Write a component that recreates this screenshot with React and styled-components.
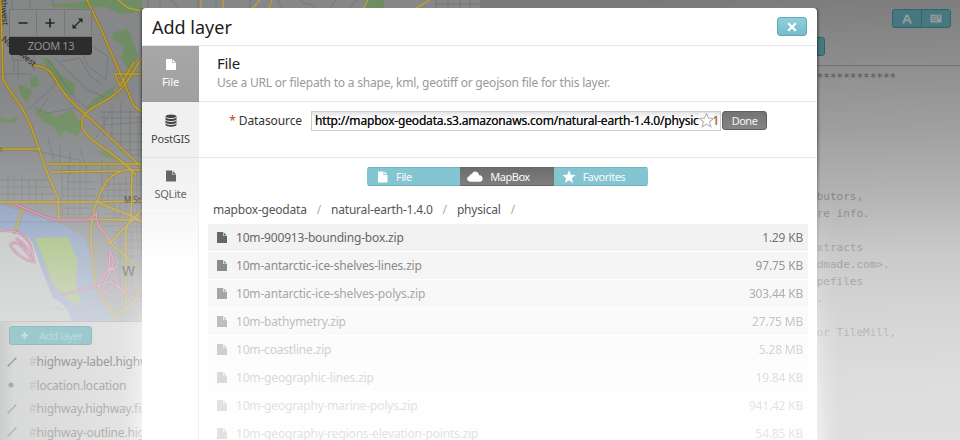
import React from "react";
import styled, { createGlobalStyle, css } from "styled-components";

const Global = createGlobalStyle`
  * { box-sizing: border-box; }
  html, body { margin: 0; padding: 0; }
  body { font-family: "Noto Sans", "Open Sans", sans-serif; font-size: 12px; color: #444; overflow: hidden; }
`;

const Screen = styled.div`
  position: relative;
  width: 960px;
  height: 440px;
  overflow: hidden;
`;

const Workspace = styled.div`
  display: flex;
  height: 440px;
  background:
    radial-gradient(ellipse 900px 520px at 1000px 480px, rgba(225,225,225,.5) 0%, rgba(225,225,225,.3) 50%, rgba(225,225,225,0) 100%),
    linear-gradient(#797979 0, #828282 60px, #909090 130px, #a5a5a5 200px, #bfbfbf 255px, #cfcfcf 320px, #dadada 380px, #dedede 440px);
`;

const LeftPane = styled.div`
  display: flex;
  flex-direction: column;
  width: 480px;
`;

const MapFrame = styled.div`
  position: relative;
  flex: none;
  height: 321px;
  overflow: hidden;
  svg { display: block; }
`;

const MapFade = styled.div`
  position: absolute;
  inset: 0;
  background: linear-gradient(rgba(228,229,230,0) 90px, rgba(228,229,230,.1) 150px, rgba(228,229,230,.26) 200px, rgba(228,229,230,.5) 250px, rgba(228,229,230,.68) 290px, rgba(228,229,230,.78) 321px);
`;

const ZoomControl = styled.div`
  position: absolute;
  left: 9px;
  top: 9px;
  width: 83px;
  border-radius: 3px;
  overflow: hidden;
  background: #2c2c2c;
`;

const ZoomButtons = styled.div`
  display: flex;
  height: 28px;
`;

const ZoomButton = styled.div`
  display: flex;
  flex: 1;
  align-items: center;
  justify-content: center;
  background: #888989;
  border: 1px solid #777;
  border-left-width: ${(p) => (p.$first ? "1px" : "0")};
`;

const ZoomLabel = styled.div`
  height: 18px;
  line-height: 17px;
  padding-left: 1px;
  text-align: center;
  font-size: 11px;
  letter-spacing: -0.35px;
  color: #939393;
`;

const LayerPanel = styled.div`
  flex: 1;
  min-height: 0;
  width: 142px;
  overflow: hidden;
  padding: 4px 0 0 9px;
  background: linear-gradient(90deg, #cccece 0, #d8d9d9 14px, #dedede 70px, #e6e6e6 142px);
  border-top: 1px solid #c8caca;
`;

const AddLayerButton = styled.div`
  display: flex;
  align-items: center;
  gap: 10px;
  width: 83px;
  height: 19px;
  padding-left: 10px;
  margin-bottom: 5px;
  border: 1px solid #93bcbf;
  border-radius: 3px;
  background: #9cc9cd;
  color: #b9dbde;
  font-size: 11px;
  letter-spacing: -0.6px;
  white-space: nowrap;
`;

const LayerRow = styled.div`
  display: flex;
  align-items: center;
  height: 23.5px;
  white-space: nowrap;
  color: ${(p) => p.$tone};
  font-size: 12px;
  letter-spacing: -0.2px;
  svg { width: 20px; height: 14px; margin-left: -5px; margin-right: 5px; flex: none; }
`;

const Hash = styled.span`
  color: #c6c6c6;
`;

const Editor = styled.div`
  display: flex;
  flex-direction: column;
  flex: 1;
`;

const EditorToolbar = styled.div`
  display: flex;
  flex-direction: column;
  height: 66px;
  flex: none;
  padding: 9px 9px 0 0;
  border-bottom: 1px solid #727272;
  box-shadow: 0 1px 0 #8a8a8a;
`;

const ToolGroup = styled.div`
  display: flex;
  align-self: flex-end;
  width: 59px;
  height: 19px;
  border: 1px solid #33626a;
  border-radius: 3px;
  background: #457880;
`;

const ToolButton = styled.div`
  display: flex;
  flex: 1;
  align-items: center;
  justify-content: center;
  & + & { border-left: 1px solid #33626a; }
`;

const StyleTab = styled.div`
  width: 40px;
  height: 19px;
  margin: 9px 0 0 305px;
  border: 1px solid #33626a;
  border-radius: 3px;
  background: #457880;
`;

const Code = styled.div`
  padding: 3px 0 0 336.7px;
  font-family: "DejaVu Sans Mono", "Liberation Mono", monospace;
  font-size: 11px;
  white-space: pre;
`;

const CodeLine = styled.div`
  height: 17px;
  line-height: 17px;
  margin-top: ${(p) => p.$skip * 17}px;
  color: ${(p) => p.$tone};
`;

const Glow = styled.div`
  position: absolute;
  left: 142px;
  top: 0;
  width: 675px;
  height: 460px;
  box-shadow: 0 0 22px 2px #fff;
`;

const GlowLayer = styled.div`
  position: absolute;
  inset: 0;
  overflow: hidden;
  mask-image: linear-gradient(transparent 180px, rgba(0,0,0,.35) 300px, rgba(0,0,0,.9) 440px);
`;

const Modal = styled.div`
  position: absolute;
  left: 142px;
  top: 8px;
  width: 675px;
  height: 440px;
  border-radius: 4px 4px 0 0;
  overflow: hidden;
  background: #fff;
`;

const ModalEdge = styled.div`
  position: absolute;
  left: 142px;
  top: 8px;
  width: 675px;
  height: 440px;
  border-radius: 4px 4px 0 0;
  box-shadow: 0 0 3px 1px rgba(0,0,0,.5);
  mask-image: linear-gradient(#000 120px, rgba(0,0,0,.25) 230px, transparent 310px);
  mask-clip: no-clip;
`;

const ModalHeader = styled.div`
  display: flex;
  align-items: center;
  justify-content: space-between;
  height: 38px;
  padding: 0 10px;
  border-bottom: 1px solid #e6e6e6;
`;

const Title = styled.div`
  font-size: 18px;
  color: #1c1c1c;
`;

const CloseButton = styled.div`
  display: flex;
  align-items: center;
  justify-content: center;
  width: 30px;
  height: 19px;
  border: 1px solid #62a8b6;
  border-radius: 3px;
  background: linear-gradient(#8fcfdb, #75bccb);
`;

const ModalBody = styled.div`
  display: flex;
  height: 402px;
`;

const SideTabs = styled.div`
  width: 57px;
  background: linear-gradient(#f0f0f0 110px, #f4f4f4 150px, #fff 220px);
  border-right: 1px solid #f0f0f0;
`;

const SideTab = styled.div`
  display: flex;
  flex-direction: column;
  align-items: center;
  height: 56px;
  padding-top: ${(p) => (p.$active ? 13 : 12)}px;
  font-size: 11px;
  line-height: 15px;
  letter-spacing: -0.2px;
  gap: 4px;
  margin-right: -1px;
  color: ${(p) => p.$tone};
  border-bottom: 1px solid #e2e2e2;
  ${(p) => p.$active && css`
    color: #fff;
    background: linear-gradient(#a7a7a7, #a0a0a0);
    border-color: #999;
  `}
  &:last-child { border-bottom-color: #f3f3f3; }
`;

const Content = styled.div`
  flex: 1;
  min-width: 0;
`;

const Intro = styled.div`
  height: 56px;
  padding: 8px 0 0 18px;
  border-bottom: 1px solid #e6e6e6;
`;

const IntroTitle = styled.div`
  font-size: 15px;
  line-height: 19px;
  letter-spacing: -0.3px;
  color: #222;
`;

const IntroText = styled.div`
  font-size: 12px;
  line-height: 20px;
  letter-spacing: -0.21px;
  color: #999;
`;

const Field = styled.div`
  display: flex;
  align-items: flex-start;
  height: 56px;
  padding-top: 9px;
  border-bottom: 1px solid #e6e6e6;
`;

const FieldLabel = styled.div`
  width: 112px;
  padding-right: 9px;
  text-align: right;
  line-height: 19px;
  letter-spacing: -0.1px;
  color: #333;
`;

const Required = styled.span`
  color: #c5472b;
  margin-right: 3px;
`;

const UrlInput = styled.div`
  position: relative;
  width: 410px;
  height: 20px;
  padding-left: 3px;
  line-height: 18px;
  overflow: hidden;
  white-space: nowrap;
  border: 1px solid #ccc;
  background: linear-gradient(#e3e3e3, #f8f8f8 5px, #fff);
  letter-spacing: -0.18px;
  color: #111;
  text-shadow: 0 0 0.5px #333;
`;

const FavoriteStar = styled.div`
  position: absolute;
  right: 6px;
  top: 1px;
  display: flex;
  background: linear-gradient(#f2f2f2, #fcfcfc 5px, #fff);
`;

const Orange = styled.span`
  color: #c8793d;
`;

const DoneButton = styled.div`
  width: 45px;
  height: 19px;
  margin-left: 1px;
  border: 1px solid #5f5f5f;
  border-radius: 3px;
  background: linear-gradient(#747474, #858585);
  color: #f4f4f4;
  font-size: 11px;
  line-height: 17px;
  letter-spacing: -0.5px;
  text-align: center;
`;

const SourceTabs = styled.div`
  display: flex;
  width: 281px;
  height: 19px;
  margin: 9px 0 0 168px;
  border-radius: 3px;
  overflow: hidden;
`;

const SourceTab = styled.div`
  display: flex;
  flex: 1 1 0;
  align-items: center;
  padding-left: ${(p) => p.$inset}px;
  border: 1px solid ${(p) => (p.$active ? "#666" : "#6bb3c1")};
  border-width: 1px 0;
  background: ${(p) => (p.$active ? "linear-gradient(#6d6d6d, #7e7e7e)" : "#85c5d2")};
  color: #f6fbfc;
  font-size: 11px;
  line-height: 17px;
  letter-spacing: -0.5px;
  svg { margin-right: ${(p) => p.$gap}px; }
`;

const Breadcrumb = styled.div`
  display: flex;
  padding: 14px 0 0 14px;
  height: 38px;
  line-height: 20px;
  gap: 10px;
  letter-spacing: -0.2px;
  color: #555;
  white-space: nowrap;
`;

const Slash = styled.span`
  color: #aaa;
`;

const FileList = styled.div`
  display: flex;
  flex-direction: column;
  gap: 1px;
  margin: 0 9px;
`;

const FileRow = styled.div`
  display: flex;
  align-items: center;
  height: 27px;
  padding: 0 5px 0 9px;
  background: ${(p) => p.$fill};
  color: ${(p) => p.$tone};
  svg { margin-right: 9px; flex: none; }
`;

const FileName = styled.span`
  flex: 1;
  letter-spacing: -0.18px;
`;

const FileSize = styled.span`
  opacity: 0.9;
  letter-spacing: -0.2px;
`;

const DocIcon = ({ w = 10, h = 11 }) => (
  <svg width={w} height={h} viewBox="0 0 10 11">
    <path d="M0 0H6V4H10V11H0Z" fill="currentColor" />
    <path d="M6.6 0.3L9.8 3.4H6.6Z" fill="currentColor" />
  </svg>
);

const DatabaseIcon = () => (
  <svg width="12" height="13" viewBox="0 0 12 13">
    <path d="M0.5 2.5C0.5 -0.3 11.5 -0.3 11.5 2.5V10.5C11.5 13.4 0.5 13.4 0.5 10.5Z" fill="currentColor" />
    <path d="M0.5 3.2C2.5 5 9.5 5 11.5 3.2M0.5 6.2C2.5 8 9.5 8 11.5 6.2M0.5 9.2C2.5 11 9.5 11 11.5 9.2" stroke="#eee" strokeWidth="0.9" fill="none" />
  </svg>
);

const CloudIcon = () => (
  <svg width="16" height="11" viewBox="0 0 16 11">
    <path d="M3.6 10.7C-0.9 10.7 -0.8 5.6 2.6 5.2C2.6 3.4 4 2.7 5 3C6 -0.6 11.7 -0.3 12 4.3C16.6 4 16.8 10.7 12.8 10.7Z" fill="#fff" />
  </svg>
);

const StarShape = "M7 0.3L8.8 4.8L13.6 5.1L9.9 8.2L11.1 12.9L7 10.3L2.9 12.9L4.1 8.2L0.4 5.1L5.2 4.8Z";

const StarIcon = ({ fill = "#fff", stroke = "none", size = 14 }) => (
  <svg width={size} height={size} viewBox="0 0 14 14">
    <path d={StarShape} fill={fill} stroke={stroke} />
  </svg>
);

const LineIcon = () => (
  <svg viewBox="0 0 20 14">
    <path d="M5 10L11 4" stroke="currentColor" strokeWidth="1.1" />
    <circle cx="4.5" cy="10.5" r="1.1" fill="currentColor" />
    <circle cx="11.5" cy="3.5" r="1.1" fill="currentColor" />
  </svg>
);

const PointIcon = () => (
  <svg viewBox="0 0 20 14">
    <circle cx="7" cy="7" r="2.5" fill="currentColor" />
  </svg>
);

const mainRoads = [
  "M87 0L100 27L120 73L134 106L142 112",
  "M33 66C48 65 53 74 58 84C68 101 82 111 92 120L139 165",
  "M142 58C130 75 126 89 108 99C92 109 80 112 82 126C86 141 110 149 131 170L136 175",
  "M2 78C15 100 27 110 35 138L50 180L58 198L59 219",
  "M1 0L3 78",
  "M115 74H142",
  "M0 149H40M48 164H142M52 172L120 171",
  "M0 202H95L142 201",
  "M59 219L142 220",
  "M142 170H124C105 176 101 190 94 210C88 232 92 260 96 289",
  "M120 160L132 170L131 218L126 230V310",
  "M96 201C110 210 125 210 142 222",
  "M142 210L110 243L132 262L138 268",
  "M94 216L110 243",
  "M115 74L120 86L134 62",
  "M24 206L14 234",
  "M140 290C136 306 120 310 114 318M98 290C102 305 112 305 116 321",
];

const pinkRoads = [
  "M15 204C30 210 42 217 56 220H88L96 214",
  "M96 212L98 226L110 240",
  "M0 231C14 230 26 232 31 247L34 262C22 260 12 250 10 244",
  "M11 244C18 238 27 252 32 260M16 238C24 244 28 248 30 257",
  "M60 295L98 286L109 268L110 250",
  "M98 286L110 281L125 293L132 294M98 287L108 293L118 300",
  "M110 250L114 262L104 285M108 270C120 262 110 282 124 292",
  "M118 266L108 272",
];

const grayRoads = [
  "M0 18H30V0M12 0V60H28M0 40H12M18 52V78M0 74H32M34 70V48M14 57V74",
  "M82 36L60 20L52 0M55 58L72 75L88 90L104 97M47 58L62 80L76 100L90 110",
  "M88 44L108 56L106 80L88 66L80 48M60 62L80 58L90 76L102 85",
  "M28 110C40 96 56 90 55 80M36 116L48 98M42 114L76 108",
  "M30 150L80 160M60 145V165M70 151V175M80 150L88 172M48 138L55 165",
  "M100 112H142M100 118H142M104 125L142 122M110 134H142M115 142H142M104 112V136M112 108V142M121 102V148M130 108V160M138 116V170",
  "M96 138L110 112M120 150H142M126 155H142",
  "M8 175V205M14 175V205M22 175V205M29 180V205M36 180V205M42 190V205M0 180H50M0 187H52M0 194H54",
  "M62 166V220M68 162V220M74 164V220M80 160V218M86 164V205M66 182H94M62 189H96M62 196H96M64 208H92M60 214H92M102 160V200M108 162V205M114 176V218M120 180V218M126 176V222M137 170V240",
  "M104 184H142M104 190H142M100 196H142M104 214H142M100 226H142M112 232H142M120 240H142M120 248H142M116 256H142M120 228V290M132 232V290M138 240V290",
  "M0 222H142",
  "M50 310C52 306 58 308 64 310",
];

const topRoads = "M148 0V8M160 0V8M172 0L178 8M198 0V8M216 0V8M250 0V8M278 0L282 8M300 0C304 6 310 2 316 8M336 0L330 8M350 8L356 0M436 0V8M448 0V8M460 0V8M436 4H480M470 0V8";

const CityMap = () => (
  <svg width="480" height="321" viewBox="0 0 480 321">
    <rect width="480" height="321" fill="#868788" />
    <g fill="#6f8d62">
      <path d="M48 4L75 3L90 0H142V12L120 14L104 6L85 9L58 7Z" />
      <path d="M112 33L128 28L138 56L130 72L121 58L124 46L114 40Z" />
      <path d="M42 57L50 60L60 74L74 84L75 96L66 93L58 82L50 77Z" />
      <path d="M34 107L48 112L56 117L72 110L82 126L78 136L64 131L60 138L53 126L42 122Z" />
      <path d="M115 86L113 93L96 104L84 110L94 99Z" />
      <path d="M18 84L32 90L27 103L21 96ZM30 78L37 76L39 86L31 87Z" />
      <path d="M98 152L108 150L118 160L106 158ZM0 117L10 120L20 116L14 123L0 122Z" />
      <path d="M366 0H384V8H366Z" />
    </g>
    <path d="M0 204C36 219 64 221 82 236C91 244 92 267 94 283C100 304 112 310 114 321H65L53 298L42 270L32 242C25 230 10 230 0 229Z" fill="#7b92bb" />
    <path d="M35 238L68 237L77 260L76 282L82 308L66 298L54 286L46 266Z" fill="#91b355" />
    <path d="M0 229C10 230 25 230 32 242L42 270L53 298C60 300 68 308 72 321H0Z" fill="#b9bab9" />
    <g fill="none" stroke="#68686f" strokeWidth=".7" opacity=".75">
      {grayRoads.map((d) => <path key={d} d={d} />)}
      <path d={topRoads} />
    </g>
    <g fill="none" stroke="#8b741f" strokeWidth="2.9" strokeLinejoin="round">
      {mainRoads.map((d) => <path key={d} d={d} />)}
    </g>
    <g fill="none" stroke="#b89d38" strokeWidth="1.6" strokeLinejoin="round">
      {mainRoads.map((d) => <path key={d} d={d} />)}
      <path d="M201 0V8M223 0V8M260 0L253 8M272 0L269 8M368 0L364 8M430 0L416 8M118 0L128 8L142 11" />
    </g>
    <g fill="none" stroke="#b3457d" strokeWidth="2.6">
      {pinkRoads.map((d) => <path key={d} d={d} />)}
    </g>
    <g fill="none" stroke="#c795ae" strokeWidth="1.2">
      {pinkRoads.map((d) => <path key={d} d={d} />)}
    </g>
    <g fontFamily="Noto Sans, sans-serif" fill="#2c2925">
      <text x="0" y="0" fontSize="8" transform="translate(1 0) rotate(86)">thwest</text>
      <text x="0" y="0" fontSize="8.5" transform="translate(1 40) rotate(40)">Northwest</text>
      <text x="124" y="203" fontSize="8">M St</text>
      <text x="122" y="276" fontSize="14" fill="#080808">W</text>
      <text x="133" y="297" fontSize="8" fill="#7c552c">Co</text>
      <text x="0" y="152" fontSize="7" fill="#5c563c">t</text>
    </g>
  </svg>
);

const layers = [
  { name: "highway-label.highway", tone: "#9b9b9b", Icon: LineIcon },
  { name: "location.location", tone: "#ababab", Icon: PointIcon },
  { name: "highway.highway.fill", tone: "#afafaf", Icon: LineIcon },
  { name: "highway-outline.highway", tone: "#b0b0b0", Icon: LineIcon },
];

const code = [
  ["************", 0, "#555"],
  ["butors,", 6, "#878787"],
  ["re info.", 0, "#8f8f8f"],
  ["xtracts", 1, "#a1a1a1"],
  ["dmade.com>.", 0, "#a5a5a5"],
  ["pefiles", 0, "#a9a9a9"],
  [".", 0, "#b0b0b0"],
  ["or TileMill,", 1, "#b9b9b9"],
];

const files = [
  ["10m-900913-bounding-box.zip", "1.29 KB", "#666", "#f2f2f2"],
  ["10m-antarctic-ice-shelves-lines.zip", "97.75 KB", "#8b8b8b", "#f5f5f5"],
  ["10m-antarctic-ice-shelves-polys.zip", "303.44 KB", "#a6a6a6", "#f8f8f8"],
  ["10m-bathymetry.zip", "27.75 MB", "#bebebe", "#fafafa"],
  ["10m-coastline.zip", "5.28 MB", "#cfcfcf", "#fcfcfc"],
  ["10m-geographic-lines.zip", "19.84 KB", "#dadada", "#fdfdfd"],
  ["10m-geography-marine-polys.zip", "941.42 KB", "#e1e1e1", "#fefefe"],
  ["10m-geography-regions-elevation-points.zip", "54.85 KB", "#e2e2e2", "#fefefe"],
];

export default function App() {
  return (
    <Screen>
      <Global />
      <Workspace>
        <LeftPane>
          <MapFrame>
            <CityMap />
            <MapFade />
            <ZoomControl>
              <ZoomButtons>
                <ZoomButton $first>
                  <svg width="10" height="10"><path d="M0.5 5H9.5" stroke="#242424" strokeWidth="1.6" /></svg>
                </ZoomButton>
                <ZoomButton>
                  <svg width="10" height="10"><path d="M0.5 5H9.5M5 0.5V9.5" stroke="#242424" strokeWidth="1.6" /></svg>
                </ZoomButton>
                <ZoomButton>
                  <svg width="11" height="11" viewBox="0 0 11 11"><path d="M2 9L9 2" stroke="#242424" strokeWidth="1.3" /><path d="M6 0.5H10.5V5ZM0.5 6V10.5H5Z" fill="#242424" /></svg>
                </ZoomButton>
              </ZoomButtons>
              <ZoomLabel>ZOOM 13</ZoomLabel>
            </ZoomControl>
          </MapFrame>
          <LayerPanel>
            <AddLayerButton>
              <svg width="9" height="9"><path d="M1 4.5H8M4.5 1V8" stroke="#c4e2e4" strokeWidth="1.8" /></svg>
              Add layer
            </AddLayerButton>
            {layers.map(({ name, tone, Icon }) => (
              <LayerRow key={name} $tone={tone}>
                <Icon />
                <Hash>#</Hash>{name}
              </LayerRow>
            ))}
          </LayerPanel>
        </LeftPane>
        <Editor>
          <EditorToolbar>
            <ToolGroup>
              <ToolButton>
                <svg width="12" height="10" viewBox="0 0 12 10"><path d="M1 9.5L5 0.5H7L11 9.5H8.8L8 7.3H4L3.2 9.5ZM4.7 5.6H7.3L6 2.5Z" fill="#9a9a9a" fillRule="evenodd" /></svg>
              </ToolButton>
              <ToolButton>
                <svg width="12" height="10" viewBox="0 0 12 10"><path d="M0.5 0.5H5L6 1.3L7 0.5H11.5V8.5H7L6 9.8L5 8.5H0.5Z" fill="#9a9a9a" /><path d="M6 1.5V9M2 2.5H4.5M2 4.5H4.5M2 6.5H4.5" stroke="#457880" strokeWidth=".8" /><path d="M8 1V5L9 4.2L10 5V1Z" fill="#457880" opacity=".6" /></svg>
              </ToolButton>
            </ToolGroup>
            <StyleTab />
          </EditorToolbar>
          <Code>
            {code.map(([text, skip, tone]) => (
              <CodeLine key={text} $skip={skip} $tone={tone}>{text}</CodeLine>
            ))}
          </Code>
        </Editor>
      </Workspace>
      <GlowLayer><Glow /></GlowLayer>
      <ModalEdge />
      <Modal>
        <ModalHeader>
          <Title>Add layer</Title>
          <CloseButton>
            <svg width="10" height="10"><path d="M1.2 1.2L8.8 8.8M8.8 1.2L1.2 8.8" stroke="#fff" strokeWidth="2.3" /></svg>
          </CloseButton>
        </ModalHeader>
        <ModalBody>
          <SideTabs>
            <SideTab $active><DocIcon h={11} />File</SideTab>
            <SideTab $tone="#444"><DatabaseIcon />PostGIS</SideTab>
            <SideTab $tone="#666"><DocIcon h={12} />SQLite</SideTab>
          </SideTabs>
          <Content>
            <Intro>
              <IntroTitle>File</IntroTitle>
              <IntroText>Use a URL or filepath to a shape, kml, geotiff or geojson file for this layer.</IntroText>
            </Intro>
            <Field>
              <FieldLabel><Required>*</Required>Datasource</FieldLabel>
              <UrlInput>
                http://mapbox-geodata.s3.amazonaws.com/natural-earth-1.4.0/physical<Orange>/1</Orange>
                <FavoriteStar><StarIcon fill="#fff" stroke="#b5b5b5" size={15} /></FavoriteStar>
              </UrlInput>
              <DoneButton>Done</DoneButton>
            </Field>
            <SourceTabs>
              <SourceTab $inset={7} $gap={8}><svg width="14" height="12" viewBox="-3 0 14 12"><path d="M1 0.5H6.5V4H10.5V11.5H1ZM7.4 0.5L10.5 3.3H7.4Z" fill="#fff" /></svg>File</SourceTab>
              <SourceTab $active $inset={7} $gap={7}><CloudIcon />MapBox</SourceTab>
              <SourceTab $inset={8} $gap={7}><StarIcon />Favorites</SourceTab>
            </SourceTabs>
            <Breadcrumb>
              <span>mapbox-geodata</span><Slash>/</Slash>
              <span>natural-earth-1.4.0</span><Slash>/</Slash>
              <span>physical</span><Slash>/</Slash>
            </Breadcrumb>
            <FileList>
              {files.map(([name, size, tone, fill]) => (
                <FileRow key={name} $tone={tone} $fill={fill}>
                  <DocIcon h={11} />
                  <FileName>{name}</FileName>
                  <FileSize>{size}</FileSize>
                </FileRow>
              ))}
            </FileList>
          </Content>
        </ModalBody>
      </Modal>
    </Screen>
  );
}
